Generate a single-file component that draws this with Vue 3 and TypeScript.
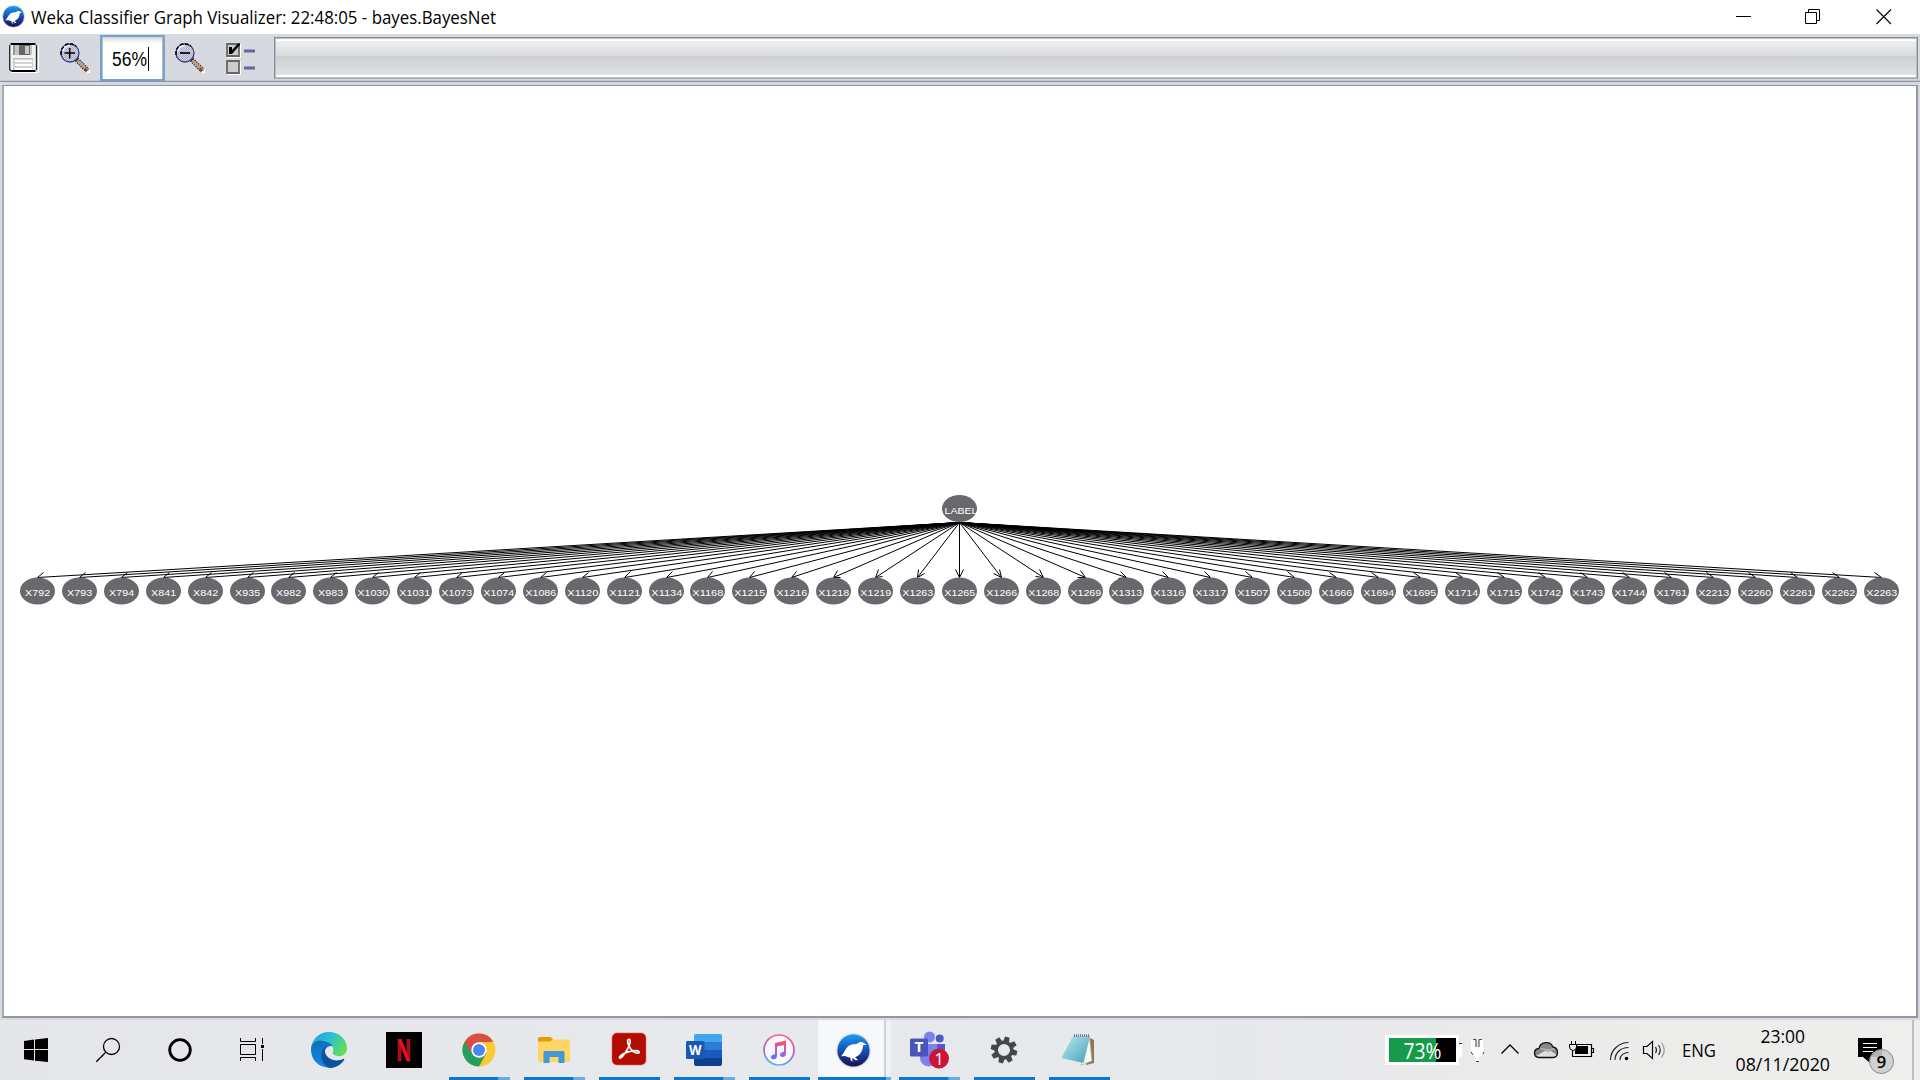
<script setup lang="ts">
interface GraphNode {
  label: string
  x: number
  arrow: string
}

const ROOT_X = 959.5
const ROOT_BOTTOM = 522.5
const LEAF_TOP = 577.5
const FIRST_X = 37.59
const PITCH = 41.9

const labels: string[] = (
  'X792 X793 X794 X841 X842 X935 X982 X983 X1030 X1031 X1073 X1074 X1086 X1120 X1121 ' +
  'X1134 X1168 X1215 X1216 X1218 X1219 X1263 X1265 X1266 X1268 X1269 X1313 X1316 X1317 ' +
  'X1507 X1508 X1666 X1694 X1695 X1714 X1715 X1742 X1743 X1744 X1761 X2213 X2260 X2261 X2262 X2263'
).split(' ')

// Arrow head: two 8px arms, 30 degrees either side of the edge
function arrowHead(x: number): string {
  if (x === ROOT_X) return `M${x - 4} ${LEAF_TOP - 8}L${x} ${LEAF_TOP}L${x + 4} ${LEAF_TOP - 8}`
  const base = ROOT_X - x
  const theta = Math.acos(base / Math.hypot(base, LEAF_TOP - ROOT_BOTTOM))
  const arm = (a: number) =>
    `${x + Math.floor(Math.cos(a) * 8)} ${LEAF_TOP + Math.floor(-Math.sin(a) * 8)}`
  const beta = Math.PI / 6
  return `M${arm(theta - beta)}L${x} ${LEAF_TOP}L${arm(theta + beta)}`
}

const nodes: GraphNode[] = labels.map((label, i) => {
  const x = Math.floor(FIRST_X + PITCH * i) + 0.5
  return { label, x, arrow: arrowHead(x) }
})

const teeth: number[] = [22.5, 67.5, 112.5, 157.5, 202.5, 247.5, 292.5, 337.5]
</script>

<template>
  <div class="screen">
    <svg class="defs" width="0" height="0">
      <defs>
        <linearGradient id="wekaBg" x1="0" y1="0" x2="0" y2="1">
          <stop offset="0" stop-color="#1b9af5" />
          <stop offset=".5" stop-color="#1550b4" />
          <stop offset="1" stop-color="#1c0e4c" />
        </linearGradient>
        <pattern id="lens" width="2" height="2" patternUnits="userSpaceOnUse">
          <rect width="2" height="2" fill="#d3d3e0" />
          <rect width="1" height="1" fill="#aeaed4" />
          <rect x="1" y="1" width="1" height="1" fill="#aeaed4" />
        </pattern>
        <symbol id="weka" viewBox="0 0 34 34">
          <circle cx="17" cy="17" r="16.7" fill="#d5d8dc" />
          <circle cx="17" cy="17" r="15.6" fill="url(#wekaBg)" />
          <path
            d="M4.8 22.5C8 20 8.5 15.5 12.5 12.5 15 10.6 19 11.3 21 10.3 22 8.6 25.5 8 27 9.7L29.8 11.4 26.3 12C26 17 24 21 20.5 22.7L18.5 23.6 21.5 26.3 19 26.5 16.3 24.3 15.6 26.5 17.5 27.6 14.5 27 13.8 23.8C11 23.6 9.5 22 8 22.4Z"
            fill="#fff"
          />
        </symbol>
        <symbol id="lensIcon" viewBox="0 0 30 30">
          <path d="M19 20L28 29.500H29.500V26" fill="none" stroke="#fff" stroke-width="1.500" />
          <path d="M16.500 16.500L27.500 27.500" stroke="#222" stroke-width="5" stroke-dasharray="1.500 1" />
          <path d="M17.500 17.500L27.500 27.500" stroke="#c09a82" stroke-width="3" />
          <path d="M24.500 25.500L27 28" stroke="#8a4a20" stroke-width="2.500" />
          <circle cx="10" cy="10" r="9" fill="url(#lens)" stroke="#3c3c80" stroke-width="1.300" />
          <path d="M1 12V7L4 3 7 1H12L16 3" fill="none" stroke="#000" stroke-width="1.500" stroke-dasharray="4 1.500" />
          <path d="M3 8L5 4 10 2.500" fill="none" stroke="#f2f2f6" stroke-width="1.600" />
        </symbol>
      </defs>
    </svg>

    <header class="titlebar">
      <svg class="app-icon" width="23" height="23"><use href="#weka" width="23" height="23" /></svg>
      <svg class="title" width="560" height="34">
        <text x="0" y="24" textLength="465" lengthAdjust="spacingAndGlyphs">Weka Classifier Graph Visualizer: 22:48:05 - bayes.BayesNet</text>
      </svg>
      <div class="controls">
        <svg width="70" height="34"><path d="M27 16.5H42" stroke="#000" /></svg>
        <svg width="70" height="34">
          <path d="M26.5 12.5H37.5V23.5H26.5ZM29.5 12V9.5H40.500V20.500H38" fill="none" stroke="#000" />
        </svg>
        <svg width="71" height="34"><path d="M27.500 9.500L42 24M42 9.500L27.500 24" stroke="#000" stroke-width="1.1" /></svg>
      </div>
    </header>

    <div class="toolbar">
      <svg class="tool save" width="30" height="30">
        <path d="M2 29.500H29.500V2" fill="none" stroke="#fff" />
        <path d="M.7 .7H27.300V28.300H2.500L.7 26.500Z" fill="#f2f2f2" />
        <path d="M4 2H23V12H4Z" fill="#c4c4c4" />
        <path d="M4 2H6V12H4Z" fill="#999" />
        <path d="M10 2H21V12H10Z" fill="#666" />
        <path d="M16 3H20V11H16Z" fill="#c9c9c9" />
        <path d="M4 15H24V28H4Z" fill="#d3d3d3" />
        <path d="M6 18H23M6 22H23M6 26H23" stroke="#fff" stroke-width="2" />
        <path d="M4 15.500H24" stroke="#bbb" />
        <path d="M1.500 1H26.500M2.500 28H26.500" stroke="#000" stroke-width="2" />
        <path d="M.7 2V26.500L2.500 28.300M27.500 2V27" fill="none" stroke="#222" stroke-width="1.300" />
      </svg>
      <svg class="tool zoom-in" width="30" height="30">
        <use href="#lensIcon" width="30" height="30" />
        <path d="M4.500 10H15M9.700 5V15.500" stroke="#000" stroke-width="1.600" />
      </svg>
      <div class="zoom-field">
        <svg width="60" height="40"><text x="10" y="28" textLength="35" lengthAdjust="spacingAndGlyphs">56%</text><path d="M46.500 9V33" stroke="#000" /></svg>
      </div>
      <svg class="tool zoom-out" width="30" height="30">
        <use href="#lensIcon" width="30" height="30" />
        <path d="M5 10H15" stroke="#000" stroke-width="1.700" />
      </svg>
      <svg class="tool options" width="30" height="32">
        <path d="M1 1H15V15H1ZM1 18H15V32H1Z" fill="#fff" />
        <path d="M1 1H13V13H1ZM1 18H13V30H1Z" fill="#ccc" stroke="#666" stroke-width="1.8" />
        <path d="M3 4H6V7L12 .5H14V2L6 11H3Z" fill="#000" />
        <path d="M18 8H29M18 25H29" stroke="#6666a0" stroke-width="3" />
      </svg>
      <div class="progress"></div>
    </div>

    <main class="pane">
      <svg class="graph" width="1912" height="929" viewBox="4 86 1912 929">
        <g stroke="#000" stroke-width="1" fill="none">
          <g v-for="n in nodes" :key="n.label">
            <path :d="`M${ROOT_X} ${ROOT_BOTTOM}L${n.x} ${LEAF_TOP}`" />
            <path :d="n.arrow" />
          </g>
        </g>
        <ellipse :cx="ROOT_X" cy="508.500" rx="17.500" ry="13.500" class="node" />
        <text x="944.500" y="513.700" textLength="33" lengthAdjust="spacingAndGlyphs" class="label">LABEL</text>
        <g v-for="n in nodes" :key="n.label">
          <ellipse :cx="n.x" cy="591" rx="17.500" ry="13.500" class="node" />
          <text
            :x="n.x - (n.label.length === 5 ? 15.2 : 12.4)"
            y="595.700"
            :textLength="n.label.length === 5 ? 31 : 25"
            lengthAdjust="spacingAndGlyphs"
            class="label"
          >{{ n.label }}</text>
        </g>
      </svg>
    </main>

    <footer class="taskbar">
      <div class="system">
        <svg width="72" height="60">
          <path d="M24 21L34 19.600V29H24ZM35 19.400L48 18V29H35ZM24 30H34V40.600L24 39.200ZM35 30H48V42L35 40.800Z" fill="#000" />
        </svg>
        <svg width="72" height="60">
          <g fill="none" stroke="#000" stroke-width="1.3"><circle cx="39.500" cy="26.500" r="8" /><path d="M33.500 32.500L24.300 41.700" /></g>
        </svg>
        <svg width="72" height="60"><circle cx="36" cy="30" r="10.300" fill="none" stroke="#000" stroke-width="2.800" /></svg>
        <svg width="72" height="60">
          <path d="M24.500 18V21.500H39.500V18M24.500 24.500H39.500V34.500H24.500ZM24.500 41V37.500H39.500V41M46.500 18V24M46.500 29V41" fill="none" stroke="#000" />
          <path d="M45 25H48V28H45Z" fill="#000" />
        </svg>
      </div>

      <div class="apps">
        <div class="app">
          <svg viewBox="0 0 36 36" width="36" height="36">
            <defs>
              <linearGradient id="edgeTop" x1="0" y1=".2" x2="1" y2=".6">
                <stop offset="0" stop-color="#1f9ee0" /><stop offset=".5" stop-color="#2fc1d0" /><stop offset="1" stop-color="#63e052" />
              </linearGradient>
              <linearGradient id="edgeLeft" x1="0" y1="0" x2="0" y2="1">
                <stop offset="0" stop-color="#0f6fb9" /><stop offset="1" stop-color="#0c8be6" />
              </linearGradient>
            </defs>
            <path d="M0 17C1 6 9 0 18 0 29 0 36 8 36 16 36 22 31 25 27 24 23 23.500 21 22 22 20 24 15 19 11 13 11 6 11 1 15 0 17Z" fill="url(#edgeTop)" />
            <path d="M0 18C0 11 5 8.500 10 8.700 16 9 21 12 21.500 14 16 13 11 19 14 26 16 31 21 34 25 34.500 12 39 0 30 0 18Z" fill="url(#edgeLeft)" />
            <path d="M15 14C8 19 9 33 19 36 25 36 31 32 33.300 27.500 33.500 26.500 33 26.500 32 27 24 31 14 26 14 19 14 17 14.500 15 15 14Z" fill="#10519b" />
          </svg>
        </div>
        <div class="app">
          <svg viewBox="0 0 36 36" width="36" height="36">
            <path d="M0 0H36V36H0Z" fill="#000" /><path d="M11.700 7H15.500V29L11.700 29.500ZM20.500 7H24.300V29.500L20.500 29Z" fill="#a90f18" /><path d="M11.700 7H15.500L24.300 29.500 20.500 29Z" fill="#e51020" />
          </svg>
        </div>
        <div class="app open multi">
          <svg viewBox="0 0 34 34" width="34" height="34">
            <circle cx="17" cy="17" r="16.500" fill="#fbc935" />
            <path d="M17 17L2.700 8.700A16.500 16.500 0 0 0 17 33.500L24.500 20Z" fill="#23a05b" />
            <path d="M17 17L2.700 8.700A16.500 16.500 0 0 1 31.300 8.800L17 9.300Z" fill="#d94f44" /><path d="M2.700 8.700L9.900 20.500 17 9H31.300" fill="#d94f44" />
            <circle cx="17" cy="17" r="7.700" fill="#fff" /><circle cx="17" cy="17" r="6" fill="#4a87f0" />
          </svg>
        </div>
        <div class="app open multi">
          <svg viewBox="0 0 34 34" width="34" height="34">
            <path d="M1 5.500Q1 4 2.500 4H13.500L16 6.500V11H1Z" fill="#dfa006" /><path d="M1 8.500H13L16 6.500H31.500Q33 6.500 33 8V28Q33 29 32 29H2Q1 29 1 28Z" fill="#ffd665" />
            <path d="M6.500 30V19.500Q6.500 18 8 18H26Q27.500 18 27.500 19.500V30H21.500V24H12.500V30Z" fill="#3f98d9" />
          </svg>
        </div>
        <div class="app open">
          <svg viewBox="0 0 34 34" width="34" height="34">
            <rect width="34" height="32" rx="5" fill="#b30c00" stroke="#d5675f" stroke-width=".6" />
            <path d="M16.500 6.500C14 7 17 15 21 18.500 25 21 28 20.500 27 18.500 25 16.500 16 18 11 21 7 23.500 6.500 25.500 8.500 25 12 23 20 10 17.800 6.800Q17.300 6 16.500 6.500Z" fill="none" stroke="#fff" stroke-width="1.700" />
          </svg>
        </div>
        <div class="app open multi">
          <svg viewBox="0 0 36 34" width="36" height="34">
            <path d="M8 9V3Q8 1 10 1H34Q36 1 36 3V9Z" fill="#42a5ee" /><path d="M8 9H36V17H8Z" fill="#2b7cd3" /><path d="M8 17H36V25H8Z" fill="#185abd" /><path d="M8 25H36V31Q36 33 34 33H10Q8 33 8 31Z" fill="#103f91" />
            <rect y="8" width="18.500" height="18" rx="1.500" fill="#1b57b5" />
            <text x="3" y="21.500" textLength="12.500" lengthAdjust="spacingAndGlyphs" class="tile">W</text>
          </svg>
        </div>
        <div class="app open">
          <svg viewBox="0 0 34 34" width="34" height="34">
            <defs>
              <linearGradient id="ring" x1=".6" y1="0" x2=".4" y2="1"><stop offset="0" stop-color="#fb5f70" /><stop offset=".55" stop-color="#b05cdd" /><stop offset="1" stop-color="#4ab8f4" /></linearGradient>
              <linearGradient id="note" x1=".5" y1="0" x2=".3" y2="1"><stop offset="0" stop-color="#fa5366" /><stop offset=".5" stop-color="#b45ce0" /><stop offset="1" stop-color="#5d72fc" /></linearGradient>
            </defs>
            <circle cx="17" cy="17" r="15" fill="#faf8fc" stroke="url(#ring)" stroke-width="1.700" />
            <path d="M13 10L24 7.500V20.500C24 25 17.500 25 18 21.500 18.300 19.500 20.500 19.300 22 18.500V12L15 13.500V23C15 27.500 8.500 27 9 23.700 9.300 22 11.500 21.700 13 21Z" fill="url(#note)" />
          </svg>
        </div>
        <div class="app open active">
          <svg width="35" height="35"><use href="#weka" width="35" height="35" /></svg>
        </div>
        <div class="app open multi">
          <svg class="teams" viewBox="0 0 39 38" width="39" height="38">
            <circle cx="19.500" cy="6" r="5.500" fill="#7b83eb" /><circle cx="29.700" cy="7.500" r="4" fill="#5059c9" />
            <path d="M24 13H35V24Q35 29 30 29H24Z" fill="#5059c9" /><path d="M10 13H27V27A8.500 8.500 0 0 1 10 27Z" fill="#7b83eb" />
            <rect y="7.500" width="18" height="18" rx="1.500" fill="#4b53bc" />
            <text x="4.500" y="21" textLength="9" lengthAdjust="spacingAndGlyphs" class="tile">T</text>
            <circle cx="29" cy="27.500" r="10" fill="#cd1339" />
            <text x="24.300" y="33.500" class="badge-text">1</text>
          </svg>
        </div>
        <div class="app open">
          <svg viewBox="-14 -14 28 28" width="28" height="28">
            <path v-for="a in teeth" :key="a" d="M-3 -8L-2.300 -13.300H2.300L3 -8Z" fill="#464748" :transform="`rotate(${a - 8})`" />
            <circle r="7.800" fill="none" stroke="#464748" stroke-width="3.600" />
          </svg>
        </div>
        <div class="app open">
          <svg class="notepad" viewBox="0 0 34 34" width="34" height="34">
            <defs><linearGradient id="pad" x1="0" y1="0" x2="1" y2="1"><stop offset="0" stop-color="#bfe8ee" /><stop offset="1" stop-color="#43a3b6" /></linearGradient></defs>
            <path d="M29 5L33 7V30L25 32Z" fill="#94784b" /><path d="M28.500 4L31 28 20 32Z" fill="#f5f8f8" stroke="#9cabae" stroke-width=".6" /><path d="M12 3H29L22.500 30 .5 25Z" fill="url(#pad)" /><path d="M13 2.500H29" stroke="#667376" stroke-width="2.500" stroke-dasharray="1 1" />
          </svg>
        </div>
      </div>

      <div class="tray">
        <svg width="80" height="60">
          <path d="M0 15H74V24H77V37H74V45H0Z" fill="#fff" /><path d="M4 18H51V42H4Z" fill="#179b4a" /><path d="M51 18H71V42H51Z" fill="#000" /><path d="M74 23.500H77" stroke="#333" />
          <text x="18.500" y="39" textLength="38" lengthAdjust="spacingAndGlyphs" class="percent">73%</text>
        </svg>
        <svg width="28" height="60">
          <path d="M8 19V28M16 19V28" stroke="#fff" stroke-width="4" /><path d="M6 27H19Q19 36 14 37V42H11V37Q6 36 6 27Z" fill="#fff" /><path d="M8 19.500H11V27M14 27V19.500H17M6 32L8 35M18 34L19 32M11 41.500H14" fill="none" stroke="#444" />
        </svg>
        <svg width="34" height="60"><path d="M8.500 33.500L17 25L25.500 33.500" fill="none" stroke="#000" stroke-width="1.300" /></svg>
        <svg width="36" height="60">
          <path d="M12 37.500C6 37 6 29 12 28.500 13 22 23 20 26 27 32 28 32 37 26 37.500Z" fill="#888" />
          <path d="M9 36L21 29 30 35 27 37.500H12Z" fill="#ddd" /><path d="M12 28.500Q17 28 21 31L28 28" fill="none" stroke="#aaa" stroke-width="2" />
          <path d="M12 37.500C6 37 6 29 12 28.500 13 22 23 20 26 27 32 28 32 37 26 37.500Z" fill="none" stroke="#111" stroke-width="1.300" />
        </svg>
        <svg class="battery" width="40" height="60">
          <path d="M14 24.500H29.500V36.500H10.500V31M30 28.500H31.500V32.500H30" fill="none" stroke="#000" stroke-width="1.200" /><path d="M14 26H26V34H13V31Z" fill="#000" />
          <path d="M9.500 21V25M13.500 21V25M7.500 24.500H14.500V27Q14.500 30 11 30.500 7.500 30 7.500 27Z" fill="#ededed" stroke="#000" />
        </svg>
        <svg width="34" height="60">
          <g fill="none" stroke="#222" stroke-width="1.200"><path d="M7.500 40C7.500 30 16 22.500 25.500 22.500" /><path d="M12 40C12 32.500 18 27.500 25.500 27.500" /><path d="M17 40C17 35 21 32.500 25.500 32.500" /></g><circle cx="23.500" cy="38.500" r="1.800" fill="#000" />
        </svg>
        <svg width="39" height="60">
          <path d="M6.500 26.500H10L15.500 21.500V38.500L10 33.500H6.500Z" fill="none" stroke="#000" stroke-width="1.200" /><path d="M18.500 27Q20.500 30 18.500 33M21.500 25Q25 30 21.500 35" fill="none" stroke="#222" stroke-width="1.200" /><path d="M24.500 22.500Q30 30 24.500 37.500" fill="none" stroke="#999" stroke-width="1.200" />
        </svg>
        <svg width="44" height="60"><text x="6" y="37" textLength="34" lengthAdjust="spacingAndGlyphs">ENG</text></svg>
        <svg width="116" height="60">
          <text x="40.500" y="23" textLength="44.500" lengthAdjust="spacingAndGlyphs">23:00</text>
          <text x="15.500" y="51" textLength="94.500" lengthAdjust="spacingAndGlyphs">08/11/2020</text>
        </svg>
        <svg width="76" height="60">
          <path d="M22 18H46V37H34V43L27 37H22Z" fill="#000" /><path d="M27 23.500H41M27 27.500H41M27 31.500H37" stroke="#fff" />
          <circle cx="45.500" cy="41.500" r="12" fill="#ccc" fill-opacity=".88" stroke="#8c8c8c" /><text x="40.500" y="48" class="count">9</text>
        </svg>
        <div class="peek"></div>
      </div>
    </footer>
  </div>
</template>

<style>
body {
  overflow: hidden;
}
</style>

<style scoped>
.screen {
  width: 1920px;
  height: 1080px;
  display: flex;
  flex-direction: column;
  background: #d6d9df;
  font-family: 'Open Sans', 'Noto Sans', sans-serif;
  color: #000;
}
.screen svg {
  display: block;
  flex: none;
  overflow: visible;
}
.screen .defs {
  width: 0;
  height: 0;
  overflow: hidden;
}
.titlebar {
  height: 34px;
  display: flex;
  background: #fff;
}
.app-icon {
  margin: 5px 6px 0 2px;
}
.title {
  font-size: 17.5px;
}
.controls {
  display: flex;
  margin-left: auto;
}
.toolbar {
  height: 48px;
  display: flex;
  align-items: flex-start;
  box-sizing: border-box;
  border-bottom: 1px solid #8f939e;
  box-shadow: inset 0 -1px #c4c8d0;
}
.tool {
  margin-top: 9px;
}
.save {
  margin-left: 9px;
}
.zoom-in {
  margin-left: 21px;
}
.zoom-field {
  box-sizing: border-box;
  width: 65px;
  height: 46px;
  margin: 1px 0 0 10px;
  border: 2px solid #73a4d1;
  background: linear-gradient(#d5d5d5, #fff 6px);
  box-shadow: inset 1px 0 #bbb, inset -1px 0 #bbb;
  font: 20px 'Liberation Sans', sans-serif;
}
.zoom-field svg {
  margin: 1px 0 0;
}
.zoom-out {
  margin-left: 10px;
}
.options {
  margin-left: 21px;
}
.progress {
  box-sizing: border-box;
  flex: 1;
  height: 42px;
  margin: 3px 2px 0 18px;
  border: 1px solid #8b8e98;
  border-bottom-color: #a6aab3;
  box-shadow: inset 0 0 0 1px #b9bcc5, inset 0 3px #fff, inset 0 -3px #fff;
  background: linear-gradient(#f4f4f5, #d9dadc 44%, #cdced2 46%, #e4e5e9);
}
.pane {
  box-sizing: border-box;
  width: 1916px;
  height: 933px;
  margin: 3px 0 2px 2px;
  border: 2px solid #9297a1;
  border-top-width: 1px;
  border-left-color: #a5adb8;
  background: #fff;
}
.node {
  fill: #68696d;
}
.label {
  font: 9.8px 'Liberation Sans', sans-serif;
  fill: #fff;
}
.taskbar {
  height: 60px;
  margin-top: auto;
  display: flex;
  background: linear-gradient(90deg, #e4e6e9, #e8e9ed 40%, #e7e8eb 65%, #ececea 86%, #eeeeec);
}
.system {
  display: flex;
}
.apps {
  display: flex;
  margin-left: 4px;
}
.app {
  position: relative;
  box-sizing: border-box;
  width: 75px;
  height: 60px;
  padding-right: 2px;
  display: flex;
  align-items: center;
  justify-content: center;
}
.teams {
  margin-left: 2px;
}
.notepad {
  margin-right: 1px;
}
.battery {
  position: relative;
  left: -1px;
}
.open::after {
  content: '';
  position: absolute;
  left: 7px;
  bottom: 0;
  width: 61px;
  height: 3px;
  background: #0878d7;
}
.multi::after {
  background: linear-gradient(90deg, #0878d7 49px, #4f98dc 49px, #68abe5 51px);
}
.active {
  background: linear-gradient(90deg, transparent 1px, #f7f8fa 1px, #f7f8fa 67px, #cfd0d4 67px, #cfd0d4 69px, #f0f1f3 69px, #f0f1f3 74px, transparent 74px);
}
.open.active::after {
  left: 1px;
  width: 73px;
  background: linear-gradient(90deg, #0878d7 68px, #68abe5 68px);
}
.tile {
  font: bold 14px 'Open Sans', sans-serif;
  fill: #fff;
}
.badge-text {
  font: 17px 'Open Sans', sans-serif;
  fill: #fff;
}
.tray {
  display: flex;
  margin-left: auto;
  font-size: 18px;
}
.percent {
  font-size: 21px;
  fill: #fff;
}
.count {
  font-size: 17px;
  font-weight: 600;
}
.peek {
  width: 6px;
  border-left: 2px solid #bfbfbf;
}
</style>
